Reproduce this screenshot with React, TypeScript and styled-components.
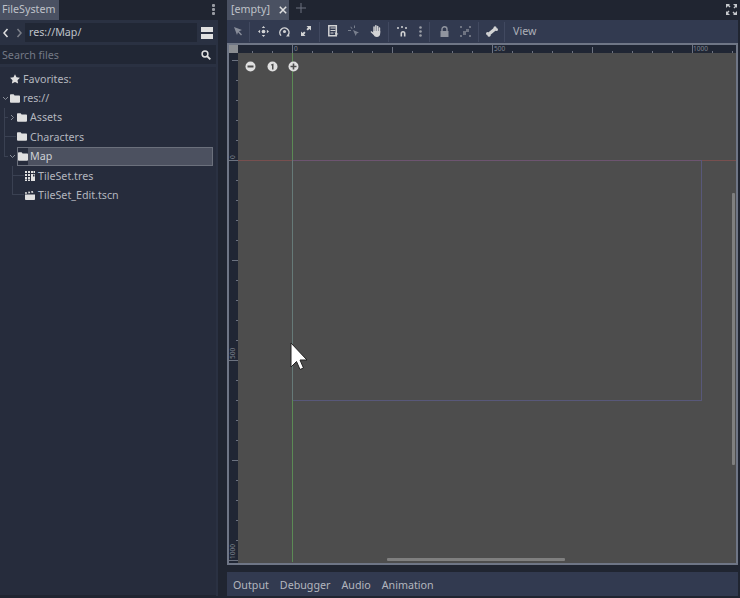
import React from 'react';
import styled, { createGlobalStyle } from 'styled-components';

const GlobalStyle = createGlobalStyle`
  html, body { margin: 0; padding: 0; background: #202531; overflow: hidden; }
  body { font-family: "Noto Sans", sans-serif; font-size: 10.7px; color: #b9bcc4; }
`;

const Page = styled.div`
  display: flex;
  width: 740px;
  height: 598px;
  background: #202531;
`;

const LeftDock = styled.div`
  display: flex;
  flex-direction: column;
  width: 218px;
  height: 596px;
  margin-right: 9px;
`;

const TabRow = styled.div`
  display: flex;
  align-items: center;
  height: 20px;
  flex-shrink: 0;
`;

const Tab = styled.div<{ $width: number; $pad?: number }>`
  display: flex;
  align-items: center;
  height: 20px;
  width: ${({ $width }) => $width}px;
  box-sizing: border-box;
  padding: 0 2px 3px ${({ $pad }) => $pad ?? 2}px;
  background: #4a5162;
  color: #bfc2c9;
  flex-shrink: 0;
`;

const TabTitle = styled.span`
  margin-right: 9px;
`;

const TabClose = styled.span`
  display: flex;
  padding-top: 3px;
`;

const TabSpacer = styled.div`
  flex: 1;
`;

const DockPanel = styled.div`
  flex: 1;
  display: flex;
  flex-direction: column;
  background: #2a3142;
  padding-top: 3px;
  min-height: 0;
`;

const PathRow = styled.div`
  display: flex;
  align-items: center;
  height: 19px;
  flex-shrink: 0;
`;

const NavButton = styled.div<{ $dim?: boolean }>`
  display: flex;
  justify-content: center;
  width: 12.5px;
  opacity: ${({ $dim }) => ($dim ? 0.45 : 1)};
  flex-shrink: 0;
`;

const PathField = styled.div`
  width: 172px;
  height: 19px;
  box-sizing: border-box;
  padding-left: 4px;
  background: #212735;
  color: #bfc2c9;
  line-height: 19px;
  flex-shrink: 0;
`;

const SplitButton = styled.div`
  display: flex;
  justify-content: center;
  width: 19px;
`;

const SearchField = styled.div`
  display: flex;
  align-items: center;
  justify-content: space-between;
  width: 216px;
  height: 19px;
  margin-top: 3px;
  box-sizing: border-box;
  padding: 0 5px 0 2px;
  background: #212735;
  color: #747985;
  flex-shrink: 0;
`;

const Tree = styled.div`
  width: 216px;
  flex: 1;
  margin-top: 3px;
  box-sizing: border-box;
  padding-top: 2px;
  background: #262c3c;
  border-bottom: 1px solid #202531;
`;

const TreeRow = styled.div<{ $indent: number }>`
  position: relative;
  display: flex;
  align-items: center;
  height: 19.4px;
  padding-left: ${({ $indent }) => $indent}px;
`;

const TreeLine = styled.span<{ $x: number; $top: number; $w: number; $h: number }>`
  position: absolute;
  left: ${({ $x }) => $x}px;
  top: ${({ $top }) => $top}px;
  width: ${({ $w }) => $w}px;
  height: ${({ $h }) => $h}px;
  background: #3a4152;
`;

const Caret = styled.span`
  display: flex;
  justify-content: center;
  width: 10px;
  flex-shrink: 0;
`;

const TreeLabel = styled.div<{ $selected?: boolean }>`
  display: flex;
  align-items: center;
  gap: ${({ $selected }) => ($selected ? 2 : 3)}px;
  height: 19.4px;
  box-sizing: border-box;
  flex: ${({ $selected }) => ($selected ? 1 : '0 0 auto')};
  margin-right: ${({ $selected }) => ($selected ? 3 : 0)}px;
  color: ${({ $selected }) => ($selected ? '#cfd1d6' : '#b3b6be')};
  background: ${({ $selected }) => ($selected ? '#4c5160' : 'transparent')};
  outline: ${({ $selected }) => ($selected ? '1px solid #6b707c' : 'none')};
  outline-offset: -1px;
`;

const SelectedIcon = styled.span`
  display: flex;
  align-items: center;
  align-self: stretch;
  margin: 1px 0 1px 1px;
  background: #262c3c;
`;

const MainColumn = styled.div`
  display: flex;
  flex-direction: column;
  width: 511px;
  height: 596px;
`;

const PlusIcon = styled.div`
  display: flex;
  margin-left: 7px;
  padding-bottom: 4px;
`;

const Toolbar = styled.div`
  display: flex;
  align-items: center;
  height: 23px;
  background: #323a50;
  padding-left: 3px;
  flex-shrink: 0;
`;

const ToolSlot = styled.div<{ $w?: number; $fade?: number }>`
  display: flex;
  align-items: center;
  justify-content: center;
  width: ${({ $w }) => $w ?? 21}px;
  padding-bottom: 1px;
  opacity: ${({ $fade }) => $fade ?? 0.92};
  flex-shrink: 0;
`;

const ToolDivider = styled.div`
  width: 1px;
  height: 20px;
  margin: 0 3px;
  background: #414960;
  flex-shrink: 0;
`;

const ToolText = styled.div`
  color: #adb0b8;
  margin-left: 5px;
  padding-bottom: 2px;
`;

const Viewport = styled.div`
  position: relative;
  height: 522px;
  box-sizing: border-box;
  border: 2px solid #6f7686;
  background: #4d4d4d;
  display: grid;
  grid-template-columns: 9px 1fr;
  grid-template-rows: 8px 1fr;
  overflow: hidden;
  flex-shrink: 0;
`;

const RulerCorner = styled.div`
  background: #8a8d92;
`;

const HRuler = styled.div`
  position: relative;
  background-color: #202634;
`;

const VRuler = styled.div`
  position: relative;
  background-color: #202634;
`;

const HTick = styled.span<{ $x: number; $h: number }>`
  position: absolute;
  left: ${({ $x }) => $x}px;
  bottom: 0;
  width: 1px;
  height: ${({ $h }) => $h}px;
  background: #6c7280;
`;

const VTick = styled.span<{ $y: number; $w: number }>`
  position: absolute;
  top: ${({ $y }) => $y}px;
  right: 0;
  height: 1px;
  width: ${({ $w }) => $w}px;
  background: #6c7280;
`;

const HRulerLabel = styled.span<{ $x: number }>`
  position: absolute;
  left: ${({ $x }) => $x}px;
  top: -1px;
  font-size: 6.5px;
  line-height: 9px;
  color: #7f8590;
`;

const VRulerLabel = styled.span<{ $y: number }>`
  position: absolute;
  left: 0;
  top: ${({ $y }) => $y}px;
  font-size: 6.5px;
  line-height: 8px;
  color: #7f8590;
  transform-origin: 0 0;
  transform: rotate(-90deg);
  white-space: nowrap;
`;

const Canvas = styled.div`
  position: relative;
`;

const GuideLine = styled.span<{ $x: number; $y: number; $w: number; $h: number; $color: string }>`
  position: absolute;
  left: ${({ $x }) => $x}px;
  top: ${({ $y }) => $y}px;
  width: ${({ $w }) => $w}px;
  height: ${({ $h }) => $h}px;
  background: ${({ $color }) => $color};
`;

const ZoomControls = styled.div`
  position: absolute;
  left: 7px;
  top: 8px;
  display: flex;
  gap: 10.5px;
`;

const ScrollThumb = styled.span<{ $x: number; $y: number; $w: number; $h: number }>`
  position: absolute;
  left: ${({ $x }) => $x}px;
  top: ${({ $y }) => $y}px;
  width: ${({ $w }) => $w}px;
  height: ${({ $h }) => $h}px;
  background: #7f7f7f;
  border-radius: 1px;
`;

const Cursor = styled.svg`
  position: absolute;
  left: 52px;
  top: 289px;
`;

const BottomGap = styled.div`
  height: 7px;
  flex-shrink: 0;
`;

const BottomBar = styled.div`
  display: flex;
  align-items: center;
  gap: 11px;
  height: 24px;
  box-sizing: border-box;
  padding: 2px 0 0 6px;
  background: #323a50;
  color: #b3b6be;
  flex-shrink: 0;
`;

const F = '#e0e0e0';

const ChevronLeft = () => (
  <svg width="6" height="10" viewBox="0 0 6 10"><path d="M4.5 1 1 5l3.5 4" fill="none" stroke={F} strokeWidth="1.5" /></svg>
);
const ChevronRight = () => (
  <svg width="6" height="10" viewBox="0 0 6 10"><path d="M1.5 1 5 5 1.5 9" fill="none" stroke={F} strokeWidth="1.5" /></svg>
);
const CaretDown = () => (
  <svg width="7" height="5" viewBox="0 0 7 5"><path d="M1 1l2.5 2.5L6 1" fill="none" stroke="#8a8f99" strokeWidth="1" /></svg>
);
const CaretRight = () => (
  <svg width="5" height="7" viewBox="0 0 5 7"><path d="M1 1l2.5 2.5L1 6" fill="none" stroke="#8a8f99" strokeWidth="1" /></svg>
);
const SplitIcon = () => (
  <svg width="12" height="12" viewBox="0 0 12 12"><path d="M0 0h12v5H0zM0 7h12v5H0z" fill={F} /></svg>
);
const MenuDots = () => (
  <svg width="3" height="11" viewBox="0 0 3 11" fill="#a4a7ae"><rect y="0" width="3" height="3" rx="1" /><rect y="4" width="3" height="3" rx="1" /><rect y="8" width="3" height="3" rx="1" /></svg>
);
const SearchIcon = () => (
  <svg width="10" height="10" viewBox="0 0 10 10"><circle cx="4" cy="4" r="2.9" fill="none" stroke={F} strokeWidth="1.5" /><path d="M6 6l3.3 3.3" stroke={F} strokeWidth="1.8" /></svg>
);
const StarIcon = () => (
  <svg width="10" height="10" viewBox="0 0 10 10"><path d="M5 .3l1.5 3 3.4.5-2.4 2.4.6 3.4L5 8 1.9 9.6l.6-3.4L.1 3.8l3.4-.5z" fill={F} /></svg>
);
const FolderIcon = () => (
  <svg width="10" height="9" viewBox="0 0 10 9"><path d="M0 1.2C0 .6.4.2 1 .2h2.6l1 1.2H9c.6 0 1 .4 1 1V8c0 .5-.4.8-1 .8H1c-.6 0-1-.3-1-.8z" fill={F} /></svg>
);
const TileSetIcon = () => (
  <svg width="10" height="10" viewBox="0 0 10 10" fill={F}>
    <path d="M0 0h2v2H0zM3 0h2v2H3zM6 0h2v2H6zM8.5 0h1.5v2H8.5zM0 3h2v2H0zM3 3h2v2H3zM0 6h2v2H0zM3 6h2v2H3zM0 8.5h2V10H0zM3 8.5h2V10H3zM6 3h4v7H6z" />
    <path d="M8 3.5h1.5v2H8z" fill="#262c3c" />
  </svg>
);
const SceneIcon = () => (
  <svg width="10" height="9" viewBox="0 0 10 9" fill={F}>
    <path d="M0 3.4h10V8c0 .5-.4 1-1 1H1c-.6 0-1-.5-1-1z" />
    <path d="M0 1.2 1.5.9 2.2 2.6.3 3zM3 .7l1.6-.3.7 1.7-1.7.3zM6 .3 7.700 0l.7 1.6-1.700.3z" />
  </svg>
);

const SelectTool = () => (
  <svg width="10" height="10" viewBox="0 0 10 10"><path d="M1 1l8 3-3 1.2L9 8.500 8 9.500 5 6.300 4 9z" fill="#9095a1" /></svg>
);
const MoveTool = () => (
  <svg width="11" height="11" viewBox="0 0 13 13" fill={F}>
    <path d="M6.500 0 8.500 2.500h-4zM6.500 13l-2-2.500h4zM0 6.500 2.500 4.500v4zM13 6.500l-2.500 2v-4z" />
    <circle cx="6.500" cy="6.500" r="2.200" />
  </svg>
);
const RotateTool = () => (
  <svg width="11" height="11" viewBox="0 0 12 12">
    <path d="M2.200 10.500A5 5 0 1 1 10 10" fill="none" stroke={F} strokeWidth="1.600" />
    <circle cx="6" cy="6" r="1.700" fill={F} />
    <path d="M7.700 11.500 11.500 11.500 10.500 8z" fill={F} />
  </svg>
);
const ScaleTool = () => (
  <svg width="10" height="10" viewBox="0 0 11 11" fill={F}>
    <path d="M6 0h5v5L9.300 3.300 7.500 5 6 3.500l1.700-1.800zM0 6l1.700 1.700L3.500 6 5 7.500 3.300 9.300 5 11H0z" />
  </svg>
);
const ListTool = () => (
  <svg width="11" height="12" viewBox="0 0 11 12">
    <path d="M.8.8h7.500v10H.8z" fill="none" stroke={F} strokeWidth="1.500" />
    <path d="M2.500 3h5M2.500 5.500h5M2.500 8h3" stroke={F} strokeWidth="1.200" />
    <path d="M6.500 7l4 2-1.600.7-.7 1.800z" fill={F} />
  </svg>
);
const PivotTool = () => (
  <svg width="12" height="12" viewBox="0 0 12 12" fill="#9ba0ab" opacity="0.75">
    <path d="M0 5h3v1H0zM3 1.500l1.500 2-.7.5L2.300 2zM6 .5h1v2.500H6zM5 5l6 2.500-2.300 1L7.700 11z" />
  </svg>
);
const PanTool = () => (
  <svg width="11" height="12" viewBox="0 0 11 12" fill={F}>
    <rect x="3.300" y="1.200" width="1.500" height="6" rx=".7" />
    <rect x="5.100" y="0" width="1.500" height="7" rx=".7" />
    <rect x="6.900" y=".8" width="1.500" height="6.500" rx=".7" />
    <rect x="8.700" y="2.200" width="1.500" height="6" rx=".7" />
    <path d="M3.300 6h6.900v2.500c0 2-1.300 3.500-3.300 3.500-1.800 0-2.600-.8-3.200-2L.8 7.300c-.4-.8.5-1.400 1.100-.9l1.400 1.200z" />
  </svg>
);
const SnapTool = () => (
  <svg width="12" height="11" viewBox="0 0 12 11" fill={F}>
    <path d="M0 1h2v2H0zM4 0h2v2H4zM8 1h2v2H8z" opacity="0.75" />
    <path d="M3.500 10.500V7.500a2.500 2.500 0 0 1 5 0v3h-1.600v-3a.9.9 0 0 0-1.800 0v3z" />
  </svg>
);
const VertDots = () => (
  <svg width="3" height="11" viewBox="0 0 3 11" fill="#a4a7ae"><circle cx="1.500" cy="1.500" r="1.300" /><circle cx="1.500" cy="5.500" r="1.300" /><circle cx="1.500" cy="9.500" r="1.300" /></svg>
);
const LockTool = () => (
  <svg width="9" height="11" viewBox="0 0 9 11">
    <path d="M2 5V3.200a2.500 2.500 0 0 1 5 0V5" fill="none" stroke={F} strokeWidth="1.400" />
    <path d="M.5 5h8v6h-8z" fill={F} />
  </svg>
);
const GroupTool = () => (
  <svg width="11" height="11" viewBox="0 0 11 11" fill={F}>
    <path d="M0 0h2v2H0zM9 0h2v2H9zM0 9h2v2H0zM9 9h2v2H9zM3 5h3V3h3v3H6v3H3z" />
  </svg>
);
const BoneTool = () => (
  <svg width="12" height="11" viewBox="0 0 12 11">
    <path d="M3 8l6-5" stroke={F} strokeWidth="3.200" />
    <circle cx="9" cy="1.800" r="1.500" fill={F} /><circle cx="10.500" cy="3.500" r="1.500" fill={F} />
    <circle cx="1.500" cy="7.500" r="1.500" fill={F} /><circle cx="3" cy="9.200" r="1.500" fill={F} />
  </svg>
);
const CloseIcon = () => (
  <svg width="8" height="8" viewBox="0 0 8 8"><path d="M.8.800l6.400 6.400M7.200.800.8 7.200" stroke={F} strokeWidth="1.500" /></svg>
);
const AddTabIcon = () => (
  <svg width="10" height="10" viewBox="0 0 10 10"><path d="M5 0v10M0 5h10" stroke="#6c7280" strokeWidth="1" /></svg>
);
const FullscreenIcon = () => (
  <svg width="11" height="11" viewBox="0 0 11 11" fill="#d5d7db">
    <path d="M0 0h4L3 1l1.500 1.500-1 1L2 2 1 3 0 4zM11 0v4l-1-1-1.500 1.500-1-1L9 2 8 1 7 0zM0 11V7l1 1 1.500-1.500 1 1L2 9l1 1 1 1zM11 11H7l1-1-1.500-1.500 1-1L9 9l1-1 1-1z" />
  </svg>
);
const ZoomOut = () => (
  <svg width="11" height="11" viewBox="0 0 11 11"><circle cx="5.500" cy="5.500" r="5" fill={F} /><path d="M2.500 4.500h6v2h-6z" fill="#4d4d4d" /></svg>
);
const ZoomReset = () => (
  <svg width="11" height="11" viewBox="0 0 11 11"><circle cx="5.500" cy="5.500" r="5" fill={F} /><path d="M4 3.500 6.500 2.500v6H5V4.300L4 4.600z" fill="#4d4d4d" /></svg>
);
const ZoomIn = () => (
  <svg width="11" height="11" viewBox="0 0 11 11"><circle cx="5.500" cy="5.500" r="5" fill={F} /><path d="M4.700 2.500h1.600v2.200h2.200v1.600H6.300v2.200H4.700V6.300H2.500V4.700h2.200z" fill="#4d4d4d" /></svg>
);

const range = (count: number) => Array.from({ length: count }, (_, i) => i);

// ruler ticks every 20px; taller at 100px, tallest at each labelled 200px
const hTickHeight = (i: number) => ((i + 8) % 10 === 0 ? 8 : (i + 3) % 5 === 0 ? 6 : 2);
const vTickWidth = (i: number) => (i % 10 === 5 ? 9 : i % 5 === 0 ? 6 : 2);

export default function App() {
  return (
    <Page>
      <GlobalStyle />
      <LeftDock>
        <TabRow>
          <Tab $width={59}>FileSystem</Tab>
          <TabSpacer />
          <ToolSlot $w={9}><MenuDots /></ToolSlot>
        </TabRow>
        <DockPanel>
          <PathRow>
            <NavButton><ChevronLeft /></NavButton>
            <NavButton $dim><ChevronRight /></NavButton>
            <PathField>res://Map/</PathField>
            <SplitButton><SplitIcon /></SplitButton>
          </PathRow>
          <SearchField>Search files<SearchIcon /></SearchField>
          <Tree>
            <TreeRow $indent={10}>
              <TreeLabel><StarIcon />Favorites:</TreeLabel>
            </TreeRow>
            <TreeRow $indent={0}>
              <Caret><CaretDown /></Caret>
              <TreeLabel><FolderIcon />res://</TreeLabel>
            </TreeRow>
            <TreeRow $indent={7}>
              <TreeLine $x={4} $top={0} $w={1} $h={49} />
              <TreeLine $x={4} $top={9} $w={4} $h={1} />
              <Caret><CaretRight /></Caret>
              <TreeLabel><FolderIcon />Assets</TreeLabel>
            </TreeRow>
            <TreeRow $indent={17}>
              <TreeLine $x={4} $top={9} $w={12} $h={1} />
              <TreeLabel><FolderIcon />Characters</TreeLabel>
            </TreeRow>
            <TreeRow $indent={7}>
              <TreeLine $x={4} $top={9} $w={4} $h={1} />
              <Caret><CaretDown /></Caret>
              <TreeLabel $selected><SelectedIcon><FolderIcon /></SelectedIcon>Map</TreeLabel>
            </TreeRow>
            <TreeRow $indent={25}>
              <TreeLine $x={12} $top={0} $w={1} $h={29} />
              <TreeLine $x={12} $top={9} $w={12} $h={1} />
              <TreeLabel><TileSetIcon />TileSet.tres</TreeLabel>
            </TreeRow>
            <TreeRow $indent={25}>
              <TreeLine $x={12} $top={9} $w={12} $h={1} />
              <TreeLabel><SceneIcon />TileSet_Edit.tscn</TreeLabel>
            </TreeRow>
          </Tree>
        </DockPanel>
      </LeftDock>
      <MainColumn>
        <TabRow>
          <Tab $width={62} $pad={4}>
            <TabTitle>[empty]</TabTitle>
            <TabClose><CloseIcon /></TabClose>
          </Tab>
          <PlusIcon><AddTabIcon /></PlusIcon>
          <TabSpacer />
          <ToolSlot $w={14}><FullscreenIcon /></ToolSlot>
        </TabRow>
        <Toolbar>
          <ToolSlot $w={16}><SelectTool /></ToolSlot>
          <ToolDivider />
          <ToolSlot><MoveTool /></ToolSlot>
          <ToolSlot><RotateTool /></ToolSlot>
          <ToolSlot><ScaleTool /></ToolSlot>
          <ToolDivider />
          <ToolSlot $w={20}><ListTool /></ToolSlot>
          <ToolSlot $w={22}><PivotTool /></ToolSlot>
          <ToolSlot $w={20}><PanTool /></ToolSlot>
          <ToolDivider />
          <ToolSlot $w={22}><SnapTool /></ToolSlot>
          <ToolSlot $w={12}><VertDots /></ToolSlot>
          <ToolDivider />
          <ToolSlot $w={22} $fade={0.55}><LockTool /></ToolSlot>
          <ToolSlot $w={20} $fade={0.35}><GroupTool /></ToolSlot>
          <ToolDivider />
          <ToolSlot $w={19}><BoneTool /></ToolSlot>
          <ToolDivider />
          <ToolText>View</ToolText>
        </Toolbar>
        <Viewport>
          <RulerCorner />
          <HRuler>
            {range(25).map((i) => (
              <HTick key={i} $x={14 + i * 20} $h={hTickHeight(i)} />
            ))}
            <HRulerLabel $x={56}>0</HRulerLabel>
            <HRulerLabel $x={256}>500</HRulerLabel>
            <HRulerLabel $x={455}>1000</HRulerLabel>
          </HRuler>
          <VRuler>
            {range(26).map((i) => (
              <VTick key={i} $y={7 + i * 20} $w={vTickWidth(i)} />
            ))}
            <VRulerLabel $y={106}>0</VRulerLabel>
            <VRulerLabel $y={306}>500</VRulerLabel>
            <VRulerLabel $y={506}>1000</VRulerLabel>
          </VRuler>
          <Canvas>
            <GuideLine $x={54} $y={0} $w={1} $h={107} $color="#5b8a55" />
            <GuideLine $x={54} $y={107} $w={1} $h={240} $color="#667a78" />
            <GuideLine $x={54} $y={347} $w={1} $h={162} $color="#5b8a55" />
            <GuideLine $x={0} $y={107} $w={54} $h={1} $color="#774f4f" />
            <GuideLine $x={55} $y={107} $w={408} $h={1} $color="#6d5470" />
            <GuideLine $x={463} $y={107} $w={36} $h={1} $color="#774f4f" />
            <GuideLine $x={463} $y={107} $w={1} $h={241} $color="#58587a" />
            <GuideLine $x={55} $y={347} $w={409} $h={1} $color="#58587a" />
            <ZoomControls>
              <ZoomOut />
              <ZoomReset />
              <ZoomIn />
            </ZoomControls>
            <ScrollThumb $x={494} $y={140} $w={3} $h={272} />
            <ScrollThumb $x={149} $y={505} $w={178} $h={3} />
            <Cursor width="18" height="29" viewBox="0 0 18 29">
              <path d="M1 1v24l5.500-5.500 3.500 8 3.500-1.500-3.500-8H17z" fill="#fff" stroke="#222" strokeWidth="1" />
            </Cursor>
          </Canvas>
        </Viewport>
        <BottomGap />
        <BottomBar>
          <span>Output</span>
          <span>Debugger</span>
          <span>Audio</span>
          <span>Animation</span>
        </BottomBar>
      </MainColumn>
    </Page>
  );
}
